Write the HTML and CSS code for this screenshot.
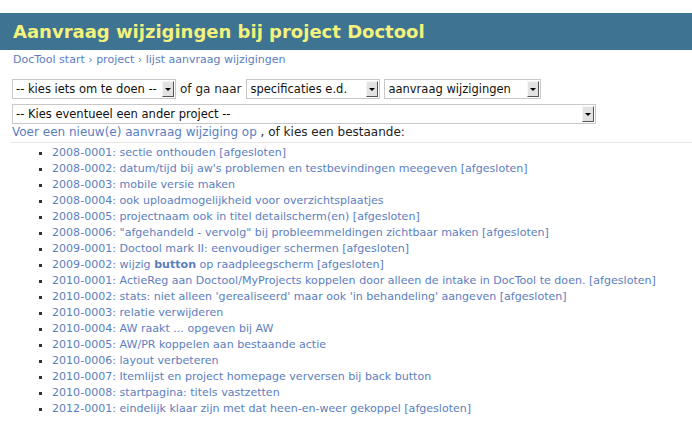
FILE: index.html
```html
<!DOCTYPE html>
<html>
<head>
<meta charset="utf-8">
<link rel="stylesheet" href="styles.css">
</head>
<body>
<h1 class="title">Aanvraag wijzigingen bij project Doctool</h1>
<div class="crumbs"><a>DocTool start</a> › <a>project</a> › <a>lijst aanvraag wijzigingen</a></div>
<div class="row first">
  <div class="sel w1"><span class="val">-- kies iets om te doen --</span><span class="arrow"></span></div>
  <span class="lbl">of ga naar</span>
  <div class="sel w2"><span class="val">specificaties e.d.</span><span class="arrow"></span></div>
  <div class="sel w3"><span class="val">aanvraag wijzigingen</span><span class="arrow"></span></div>
</div>
<div class="row second">
  <div class="sel w4"><span class="val">-- Kies eventueel een ander project --</span><span class="arrow"></span></div>
</div>
<div class="intro"><a>Voer een nieuw(e) aanvraag wijziging op</a> , of kies een bestaande:</div>
<ul class="items">
  <li><a>2008-0001: sectie onthouden [afgesloten]</a></li>
  <li><a>2008-0002: datum/tijd bij aw's problemen en testbevindingen meegeven [afgesloten]</a></li>
  <li><a>2008-0003: mobile versie maken</a></li>
  <li><a>2008-0004: ook uploadmogelijkheid voor overzichtsplaatjes</a></li>
  <li><a>2008-0005: projectnaam ook in titel detailscherm(en) [afgesloten]</a></li>
  <li><a>2008-0006: "afgehandeld - vervolg" bij probleemmeldingen zichtbaar maken [afgesloten]</a></li>
  <li><a>2009-0001: Doctool mark II: eenvoudiger schermen [afgesloten]</a></li>
  <li><a>2009-0002: wijzig <b>button</b> op raadpleegscherm [afgesloten]</a></li>
  <li><a>2010-0001: ActieReg aan Doctool/MyProjects koppelen door alleen de intake in DocTool te doen. [afgesloten]</a></li>
  <li><a>2010-0002: stats: niet alleen 'gerealiseerd' maar ook 'in behandeling' aangeven [afgesloten]</a></li>
  <li><a>2010-0003: relatie verwijderen</a></li>
  <li><a>2010-0004: AW raakt ... opgeven bij AW</a></li>
  <li><a>2010-0005: AW/PR koppelen aan bestaande actie</a></li>
  <li><a>2010-0006: layout verbeteren</a></li>
  <li><a>2010-0007: Itemlijst en project homepage verversen bij back button</a></li>
  <li><a>2010-0008: startpagina: titels vastzetten</a></li>
  <li><a>2012-0001: eindelijk klaar zijn met dat heen-en-weer gekoppel [afgesloten]</a></li>
</ul>
</body>
</html>
```
FILE: styles.css
```css
html, body {
  margin: 0;
  padding: 0;
  background: #ffffff;
}
body {
  font-family: "DejaVu Sans", Verdana, sans-serif;
  font-size: 11px;
  color: #222222;
}
a {
  color: #5b7ebf;
}
.title {
  margin: 13px 0 0;
  height: 37px;
  line-height: 37px;
  padding: 0 13px;
  background: #3e7391;
  color: #f2f27c;
  font-size: 18px;
  font-weight: bold;
}
.crumbs {
  padding: 0 13px;
  margin-top: 2px;
  line-height: 16px;
  color: #5b7ebf;
}
.row {
  display: flex;
  align-items: center;
  gap: 4px;
  padding: 0 12px;
}
.first {
  margin-top: 11px;
}
.second {
  margin-top: 5px;
}
.sel {
  box-sizing: border-box;
  height: 20px;
  border: 1px solid #c8c8c8;
  display: flex;
  align-items: center;
  justify-content: space-between;
  padding: 0 1px 0 3px;
  background: #fff;
  color: #111;
  font-size: 11.5px;
  white-space: nowrap;
}
.w1 { width: 164px; }
.w2 { width: 134px; margin-left: 1px; }
.w3 { width: 157px; }
.w4 { width: 584px; }
.arrow {
  flex: none;
  box-sizing: border-box;
  width: 12px;
  height: 16px;
  background: #e2e2e2;
  border-top: 1px solid #f6f6f6;
  border-left: 1px solid #f6f6f6;
  border-right: 1px solid #555;
  border-bottom: 1px solid #555;
  position: relative;
}
.arrow::after {
  content: "";
  position: absolute;
  left: 2px;
  top: 6px;
  border-left: 3px solid transparent;
  border-right: 3px solid transparent;
  border-top: 3px solid #000;
}
.lbl {
  font-size: 12px;
  color: #222;
}
.intro {
  margin-left: 10px;
  padding: 0 0 1px 2px;
  line-height: 17px;
  font-size: 12px;
  border-bottom: 1px solid #e8e8e8;
}
.items {
  margin: 2px 0 0;
  padding-left: 52px;
  list-style: square;
}
.items li {
  line-height: 16px;
  font-size: 11.07px;
  color: #333;
}
```
